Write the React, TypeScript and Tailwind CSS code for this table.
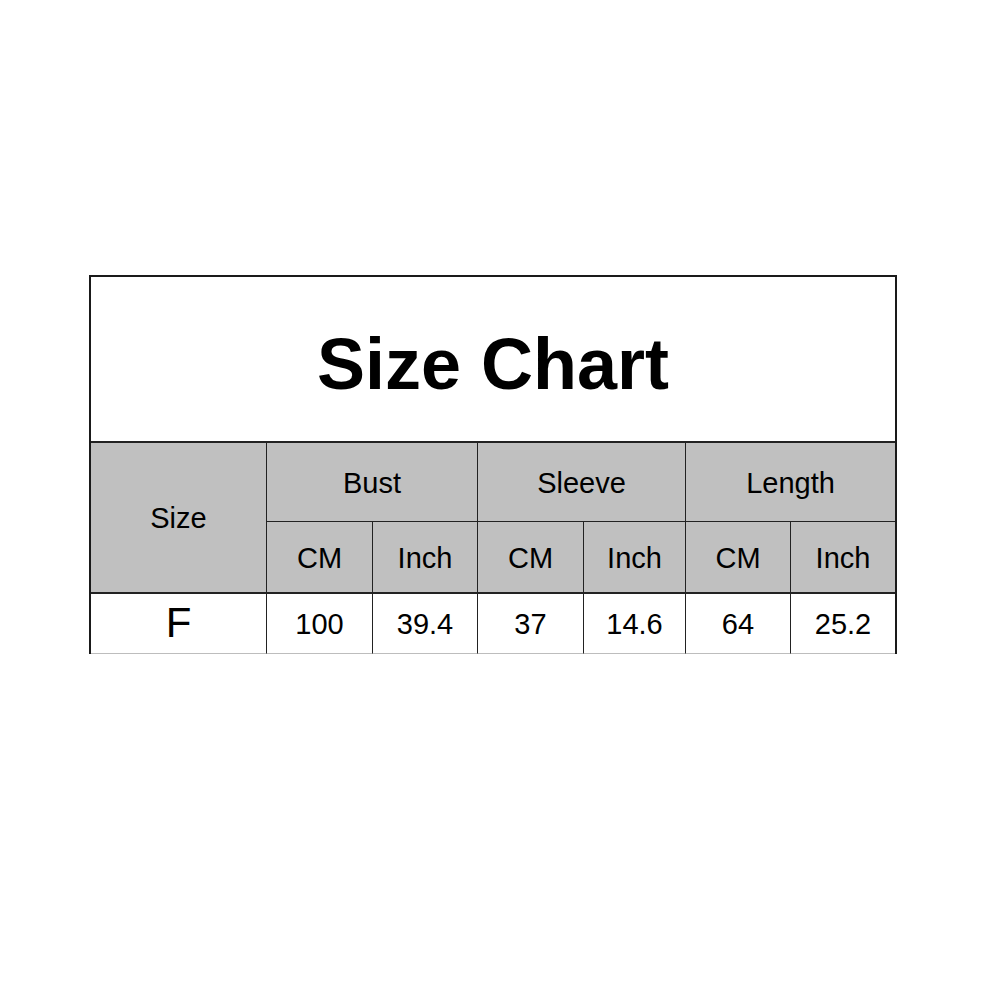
const font = "font-['Liberation_Sans',Arial,sans-serif]";

const cell = "flex items-center justify-center border-[#222] text-black";

export default function App() {
  return (
    <div className={`w-[1001px] h-[1001px] bg-white ${font}`}>
      <div className="pt-[275px] pl-[89px]">
        <div className="grid w-[808px] grid-cols-[176px_106px_105px_106px_102px_105px_104px] grid-rows-[166px_79px_72px_60px] border-t-2 border-l-2 border-r-2 border-[#1a1a1a]">
          {/* title */}
          <div className={`${cell} col-span-7 border-b-2 text-[72px] font-bold leading-none pt-[10px]`}>
            Size Chart
          </div>

          {/* header */}
          <div className={`${cell} row-span-2 border-r border-b-2 bg-[#c0c0c0] text-[29px] pt-[2px]`}>Size</div>
          <div className={`${cell} col-span-2 border-r border-b bg-[#c0c0c0] text-[29px] pt-[4px]`}>Bust</div>
          <div className={`${cell} col-span-2 border-r border-b bg-[#c0c0c0] text-[29px] pt-[4px]`}>Sleeve</div>
          <div className={`${cell} col-span-2 border-b bg-[#c0c0c0] text-[29px] pt-[4px]`}>Length</div>

          {["CM", "Inch", "CM", "Inch", "CM", "Inch"].map((t, i) => (
            <div
              key={i}
              className={`${cell} border-b-2 bg-[#c0c0c0] text-[29px] pt-[4px] ${i < 5 ? "border-r" : ""}`}
            >
              {t}
            </div>
          ))}

          {/* data */}
          <div className={`${cell} border-r border-b border-b-[#bdbdbd] text-[42px] pb-[2px]`}>F</div>
          {["100", "39.4", "37", "14.6", "64", "25.2"].map((t, i) => (
            <div
              key={i}
              className={`${cell} border-b border-b-[#bdbdbd] text-[29px] pt-[2px] ${i < 5 ? "border-r" : ""}`}
            >
              {t}
            </div>
          ))}
        </div>
      </div>
    </div>
  );
}
